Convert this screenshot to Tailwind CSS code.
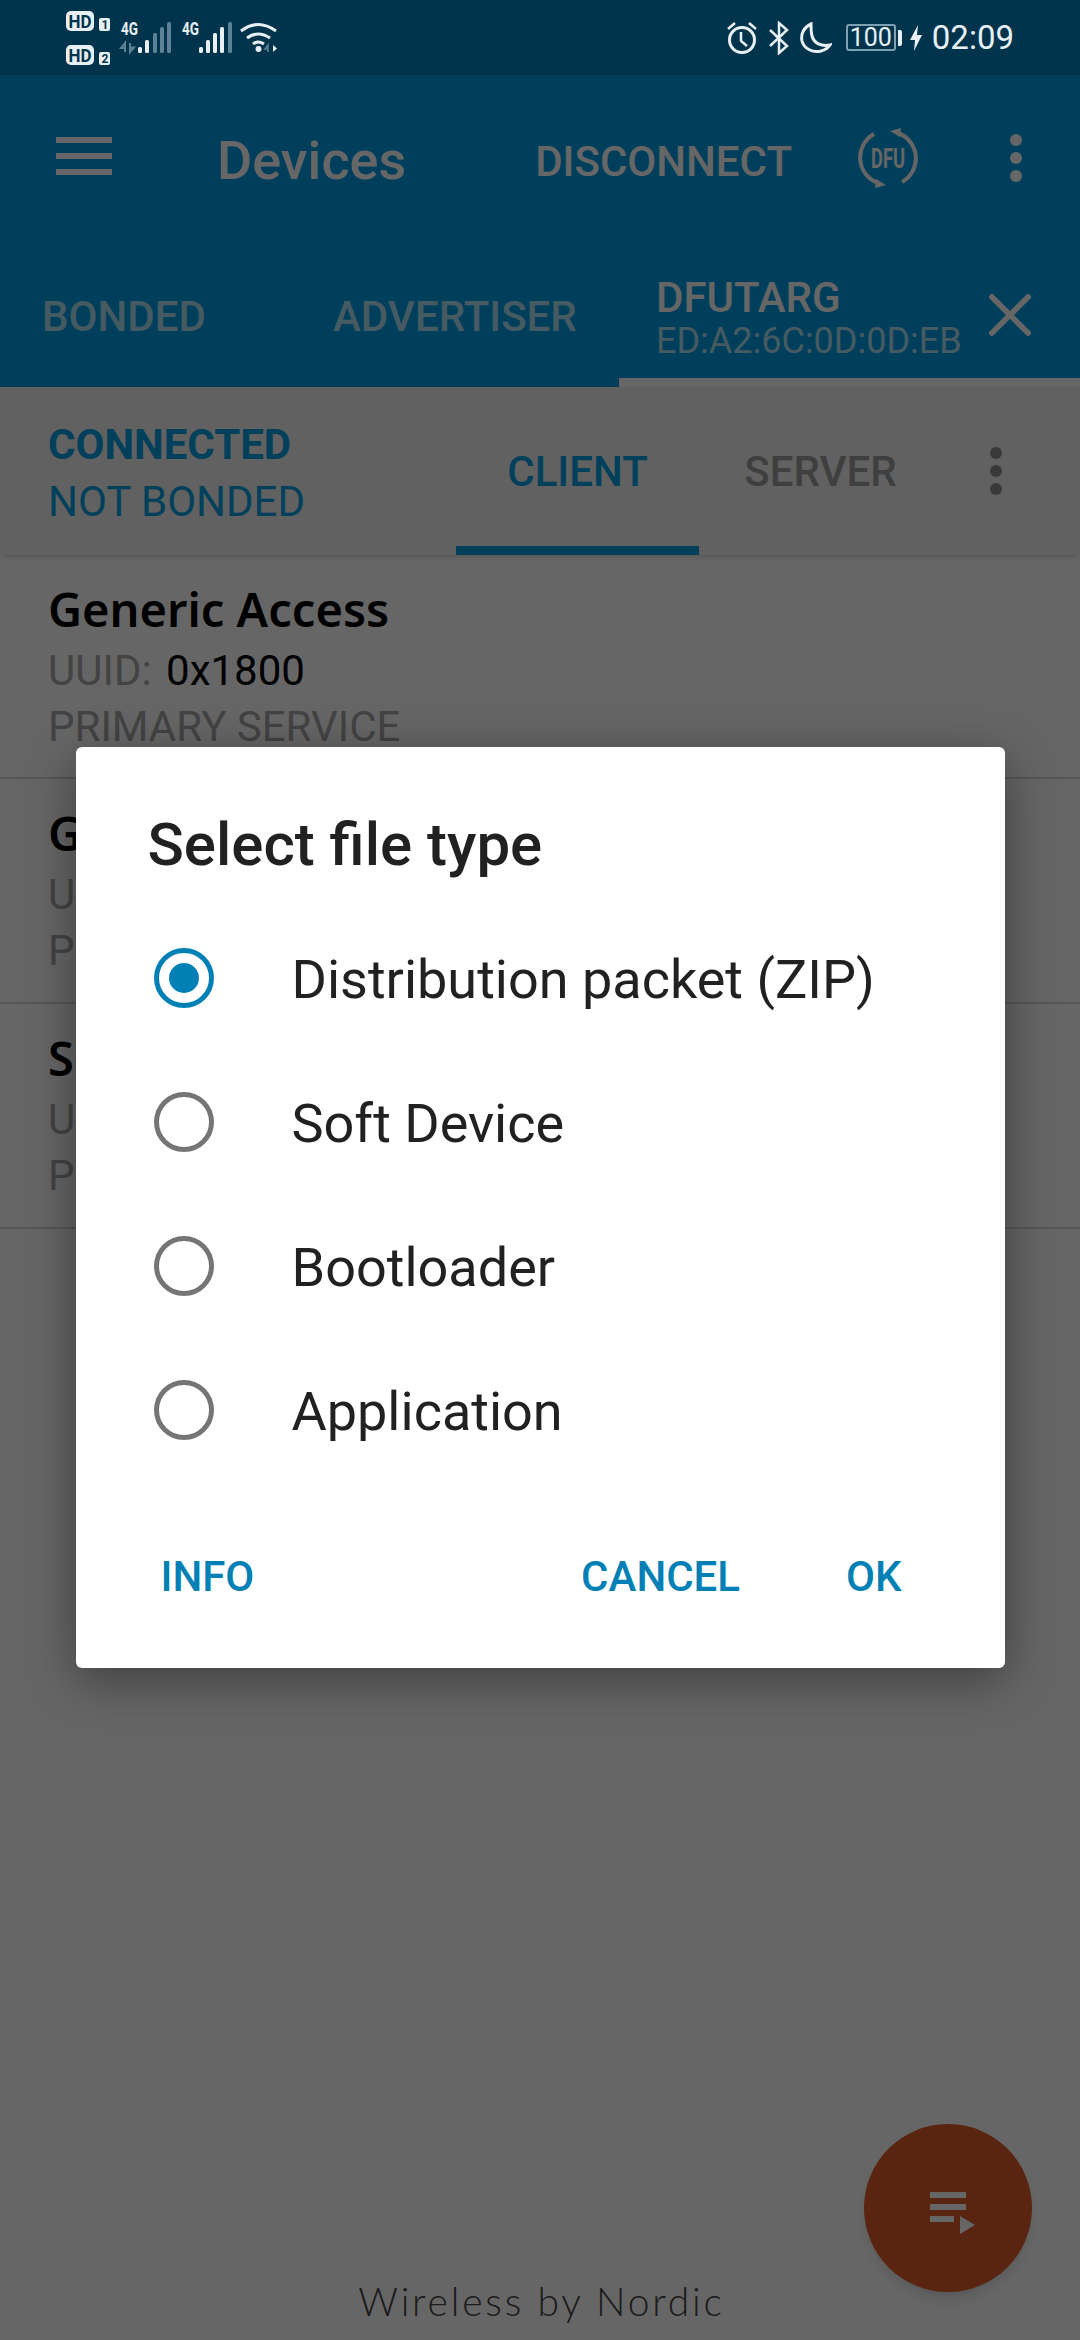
<!doctype html>
<html lang="en">
<head>
  <meta charset="utf-8">
  <meta name="viewport" content="width=device-width, initial-scale=1">
  <script src="https://cdn.jsdelivr.net/npm/@tailwindcss/browser@4"></script>
</head>
<body class="m-0 bg-white font-['Roboto',sans-serif]">
  <div class="relative w-[1080px] h-[2340px] overflow-hidden flex flex-col bg-white">

    <!-- Status bar -->
    <div class="h-[75px] shrink-0 bg-[#00344d] flex items-center text-[#e8f0f4]">
      <svg class="ml-[63px] shrink-0" width="225" height="75" viewBox="63 0 225 75">
        <rect x="66" y="11" width="28" height="20" rx="5" fill="#e8f0f4"/>
        <text x="68.500" y="28" font-family="Roboto" font-weight="700" font-size="19" fill="#00344d" textLength="23" lengthAdjust="spacingAndGlyphs">HD</text>
        <rect x="99" y="18" width="11" height="13" rx="2" fill="#e8f0f4"/>
        <text x="101.500" y="29" font-family="Roboto" font-weight="700" font-size="12" fill="#00344d">1</text>
        <rect x="66" y="45" width="28" height="20" rx="5" fill="#e8f0f4"/>
        <text x="68.500" y="62" font-family="Roboto" font-weight="700" font-size="19" fill="#00344d" textLength="23" lengthAdjust="spacingAndGlyphs">HD</text>
        <rect x="99" y="52" width="11" height="13" rx="2" fill="#e8f0f4"/>
        <text x="101.500" y="63" font-family="Roboto" font-weight="700" font-size="12" fill="#00344d">2</text>
        <text x="121" y="35" font-family="Roboto" font-weight="700" font-size="18" fill="#e8f0f4" textLength="17" lengthAdjust="spacingAndGlyphs">4G</text>
        <path d="M125 52v-9l-4 5h4M130 43v9l4-4.500h-4" fill="none" stroke="#5d8195" stroke-width="2"/>
        <g fill="#e8f0f4">
          <rect x="138" y="47" width="4" height="6" rx="1.500"/>
          <rect x="145" y="40" width="4" height="13" rx="1.500"/>
        </g>
        <g fill="#5d8195">
          <rect x="153" y="33" width="4" height="20" rx="1.500"/>
          <rect x="160" y="27" width="4" height="26" rx="1.500"/>
          <rect x="167" y="22" width="4" height="31" rx="1.500"/>
        </g>
        <text x="182" y="35" font-family="Roboto" font-weight="700" font-size="18" fill="#e8f0f4" textLength="17" lengthAdjust="spacingAndGlyphs">4G</text>
        <g fill="#e8f0f4">
          <rect x="199" y="47" width="4" height="6" rx="1.500"/>
          <rect x="206" y="40" width="4" height="13" rx="1.500"/>
          <rect x="213" y="33" width="4" height="20" rx="1.500"/>
          <rect x="220" y="27" width="4" height="26" rx="1.500"/>
        </g>
        <rect x="228" y="22" width="4" height="31" rx="1.500" fill="#5d8195"/>
        <g fill="none" stroke="#e8f0f4" stroke-width="3">
          <path d="M241 31q17-13 35 0"/>
          <path d="M247 38q11-8 23 0"/>
          <path d="M253 44q5-4 11 0"/>
        </g>
        <circle cx="258.500" cy="49" r="3" fill="#e8f0f4"/>
        <path d="M268 52v-7l-3 4h3" fill="none" stroke="#5d8195" stroke-width="1.500"/>
        <path d="M273 45l4 3.500-4 3.500z" fill="#e8f0f4"/>
      </svg>
      <div class="ml-auto mr-[66px] flex items-center">
        <svg width="32" height="34" viewBox="0 0 32 34" fill="none" stroke="#e8f0f4" stroke-width="3">
          <circle cx="16" cy="19" r="12.500"/>
          <path d="M15 11v9l6 5" stroke-width="2.500"/>
          <path d="M2 8l7-6M30 8l-7-6" stroke-width="2.500"/>
        </svg>
        <svg class="ml-[10px]" width="22" height="34" viewBox="0 0 22 34" fill="none" stroke="#e8f0f4" stroke-width="2.500">
          <path d="M2 9l17 16-8 7V2l8 7L2 25"/>
        </svg>
        <svg class="ml-[9px]" width="33" height="32" viewBox="0 0 33 32" fill="none" stroke="#e8f0f4" stroke-width="3">
          <path d="M12 2C5 5 1.500 12 3 19c2 8 11 12 19 10 4-1 7-3 9-6-9 2-16-2-18-9-1-4-1-8-1-12z"/>
        </svg>
        <div class="ml-[14px] w-[50px] h-[27px] border-2 border-[#7fa0b2] rounded-[3px] flex items-center justify-center text-[25px] leading-none">100</div>
        <div class="ml-[2px] w-[4px] h-[16px] bg-[#e8f0f4] rounded-r-[2px]"></div>
        <svg class="ml-[8px]" width="12" height="26" viewBox="0 0 12 26" fill="#e8f0f4">
          <path d="M8 0L0 15h5L4 26l8-16H7z"/>
        </svg>
        <span class="ml-[10px] text-[33px] leading-none">02:09</span>
      </div>
    </div>

    <!-- App bar -->
    <div class="h-[168px] shrink-0 bg-[#009fe3] flex items-center text-white">
      <div class="ml-[56px] w-[56px] flex flex-col gap-[10px] -mt-[6px]">
        <div class="h-[6px] bg-white"></div>
        <div class="h-[6px] bg-white"></div>
        <div class="h-[6px] bg-white"></div>
      </div>
      <span class="ml-[105px] pt-[3px] text-[54px] font-medium leading-none">Devices</span>
      <span class="ml-auto pt-[5px] text-[42px] font-medium leading-none">DISCONNECT</span>
      <svg class="ml-[66px] -mt-[2px]" width="60" height="60" viewBox="0 0 60 60" fill="none" stroke="#fff" stroke-width="4">
        <path d="M16 6A27 27 0 0 0 20 55"/>
        <path d="M44 54A27 27 0 0 0 40 5"/>
        <path d="M18 51l10 6-11 3zM42 9l-10-6 11-3z" fill="#fff" stroke="none"/>
        <text x="30" y="40" text-anchor="middle" font-family="Roboto" font-weight="700" font-size="28" fill="#fff" stroke="none" textLength="34" lengthAdjust="spacingAndGlyphs">DFU</text>
      </svg>
      <div class="ml-[92px] mr-[58px] flex flex-col gap-[6px] -mt-[2px]">
        <div class="size-[12px] rounded-full bg-white"></div>
        <div class="size-[12px] rounded-full bg-white"></div>
        <div class="size-[12px] rounded-full bg-white"></div>
      </div>
    </div>

    <!-- Device tabs -->
    <div class="h-[144px] shrink-0 bg-[#009fe3] flex text-white font-medium text-[42px] leading-none">
      <div class="w-[288px] pl-[42px] pt-[3px] flex items-center text-white/70">BONDED</div>
      <div class="w-[331px] pl-[45px] pt-[3px] flex items-center text-white/70">ADVERTISER</div>
      <div class="flex-1 pl-[37px] border-b-[9px] border-white flex items-center">
        <div class="flex flex-col -mb-[9px]">
          <span class="leading-[52px]">DFUTARG</span>
          <span class="text-[36px] leading-[34px] font-normal text-white/70">ED:A2:6C:0D:0D:EB</span>
        </div>
        <svg class="ml-[27px] -mb-[9px]" width="42" height="42" viewBox="0 0 42 42" stroke="#fff" stroke-width="5.500">
          <path d="M1 1l40 40M41 1L1 41"/>
        </svg>
      </div>
    </div>

    <!-- Connection bar -->
    <div class="h-[168px] shrink-0 bg-[#f2f2f2] flex shadow-md relative text-[#00a0e4] text-[42px] leading-none">
      <div class="w-[456px] pl-[48px] pt-[3px] flex flex-col justify-center">
        <span class="font-bold leading-[57px]">CONNECTED</span>
        <span class="leading-[57px]">NOT BONDED</span>
      </div>
      <div class="w-[243px] border-b-[9px] border-[#00a0e4] flex items-center justify-center font-medium pt-[11px]">CLIENT</div>
      <div class="w-[243px] pt-[2px] flex items-center justify-center font-medium text-[#9e9e9e]">SERVER</div>
      <div class="ml-[48px] flex flex-col justify-center gap-[6px]">
        <div class="size-[12px] rounded-full bg-[#8f8f8f]"></div>
        <div class="size-[12px] rounded-full bg-[#8f8f8f]"></div>
        <div class="size-[12px] rounded-full bg-[#8f8f8f]"></div>
      </div>
    </div>

    <!-- Services -->
    <div class="flex flex-col">
      <div class="h-[224px] pl-[48px] pt-[26px] border-b-[2px] border-[#d8d8d8]">
        <div class="font-['Noto_Sans',sans-serif] font-semibold text-[47px] leading-[56px] text-black">Generic Access</div>
        <div class="mt-[4px] text-[42px] leading-[60px] text-[#a8a8a8]">UUID: <span class="text-black ml-[4px]">0x1800</span></div>
        <div class="text-[42px] leading-[52px] text-[#a8a8a8]">PRIMARY SERVICE</div>
      </div>
      <div class="h-[225px] pl-[48px] pt-[26px] border-b-[2px] border-[#d8d8d8]">
        <div class="font-['Noto_Sans',sans-serif] font-semibold text-[47px] leading-[56px] text-black">Generic Attribute</div>
        <div class="mt-[4px] text-[42px] leading-[60px] text-[#a8a8a8]">UUID: <span class="text-black ml-[4px]">0x1801</span></div>
        <div class="text-[42px] leading-[52px] text-[#a8a8a8]">PRIMARY SERVICE</div>
      </div>
      <div class="h-[225px] pl-[48px] pt-[26px] border-b-[2px] border-[#d8d8d8]">
        <div class="font-['Noto_Sans',sans-serif] font-semibold text-[47px] leading-[56px] text-black">Secure DFU Service</div>
        <div class="mt-[4px] text-[42px] leading-[60px] text-[#a8a8a8]">UUID: <span class="text-black ml-[4px]">0xFE59</span></div>
        <div class="text-[42px] leading-[52px] text-[#a8a8a8]">PRIMARY SERVICE</div>
      </div>
    </div>

    <!-- Footer -->
    <div class="mt-auto h-[80px] flex justify-center items-center pt-[2px] pl-[3px] font-['Lato',sans-serif] font-light text-[39px] tracking-[2.800px] text-[#444444]">Wireless by Nordic</div>

    <!-- Floating button -->
    <div class="absolute left-[864px] top-[2124px] size-[168px] rounded-full bg-[#de5c2a] shadow-lg flex items-center justify-center">
      <svg width="46" height="42" viewBox="0 0 46 42" fill="#fff" class="ml-[9px] mt-[10px]">
        <rect x="0" y="0" width="36" height="6"/>
        <rect x="0" y="12" width="36" height="6"/>
        <rect x="0" y="24" width="24" height="6"/>
        <path d="M30 24l15 9-15 9z"/>
      </svg>
    </div>

    <!-- Scrim and dialog -->
    <div class="absolute inset-x-0 top-[75px] bottom-0 bg-black/60 flex justify-center items-start">
      <div class="mt-[672px] w-[929px] h-[921px] bg-white rounded-[6px] shadow-[0_12px_50px_rgba(0,0,0,0.4)] flex flex-col">
        <div class="pl-[72px] pt-[68px] text-[60px] leading-[60px] font-medium text-[#212121]">Select file type</div>
        <div class="mt-[31px] flex flex-col text-[54px] leading-none text-[#212121]">
          <div class="h-[144px] pl-[78px] flex items-center gap-[78px]">
            <div class="size-[60px] rounded-full border-[5px] border-[#0080b5] flex items-center justify-center">
              <div class="size-[30px] rounded-full bg-[#0080b5]"></div>
            </div>
            <span class="pt-[3px]">Distribution packet (ZIP)</span>
          </div>
          <div class="h-[144px] pl-[78px] flex items-center gap-[78px]">
            <div class="size-[60px] rounded-full border-[5px] border-[#757575]"></div>
            <span class="pt-[3px]">Soft Device</span>
          </div>
          <div class="h-[144px] pl-[78px] flex items-center gap-[78px]">
            <div class="size-[60px] rounded-full border-[5px] border-[#757575]"></div>
            <span class="pt-[3px]">Bootloader</span>
          </div>
          <div class="h-[144px] pl-[78px] flex items-center gap-[78px]">
            <div class="size-[60px] rounded-full border-[5px] border-[#757575]"></div>
            <span class="pt-[3px]">Application</span>
          </div>
        </div>
        <div class="flex-1 pl-[85px] pr-[103px] pt-[4px] flex items-center text-[42px] font-medium leading-none text-[#0080b5]">
          <span>INFO</span>
          <span class="ml-auto">CANCEL</span>
          <span class="ml-[106px]">OK</span>
        </div>
      </div>
    </div>
  </div>
</body>
</html>
